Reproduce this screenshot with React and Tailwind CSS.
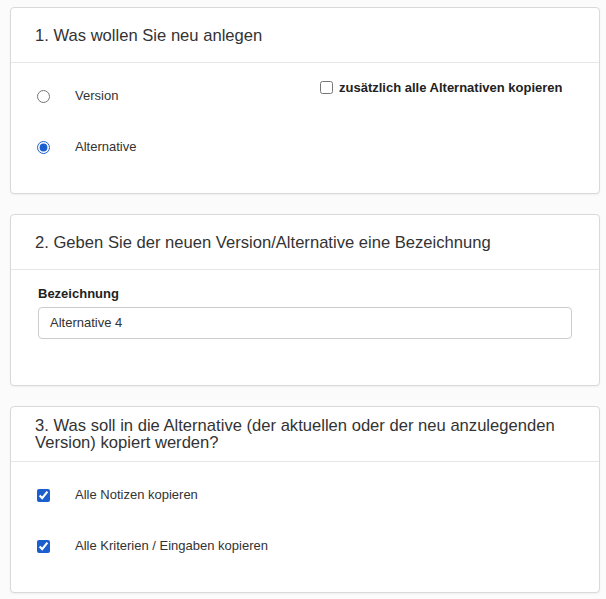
import React from "react";

function Card({ title, children, bodyClass }) {
  return (
    <div className="rounded-[4px] border border-[#d9d9d9] bg-white shadow-[0_1px_2px_rgba(0,0,0,0.05)]">
      <div className="flex h-[55px] items-center border-b border-[#e6e6e6] px-[24px] text-[16.6px] leading-[17px] text-[#333]">
        <div>{title}</div>
      </div>
      <div className={bodyClass}>{children}</div>
    </div>
  );
}

function Row({ children }) {
  return <div className="flex h-[18px] items-center">{children}</div>;
}

export default function App() {
  return (
    <div
      className="min-h-screen bg-[#fbfbfb] pl-[10px] pr-[6px] pt-[7px] pb-[6px]"
      style={{ fontFamily: '"Liberation Sans", Arial, sans-serif' }}
    >
      <div className="flex flex-col gap-[20px]">
        <Card title="1. Was wollen Sie neu anlegen" bodyClass="flex h-[130px]">
          <div className="w-[309px] pl-[26px] pt-[24px] flex flex-col gap-[33px] text-[13px] text-[#333]">
            <Row>
              <input type="radio" name="typ" className="h-[13px] w-[13px] accent-[#1b5fcf]" />
              <span className="ml-[25px]">Version</span>
            </Row>
            <Row>
              <input type="radio" name="typ" defaultChecked className="h-[13px] w-[13px] accent-[#1b5fcf]" />
              <span className="ml-[25px]">Alternative</span>
            </Row>
          </div>
          <div className="pt-[17px]">
            <div className="flex h-[15px] items-center">
              <input type="checkbox" className="h-[13px] w-[13px] accent-[#1b5fcf]" />
              <span className="ml-[6px] text-[13px] font-bold text-[#222]">zusätzlich alle Alternativen kopieren</span>
            </div>
          </div>
        </Card>

        <Card
          title="2. Geben Sie der neuen Version/Alternative eine Bezeichnung"
          bodyClass="h-[115px] px-[27px] pt-[16px]"
        >
          <div className="h-[15px] text-[13px] font-bold leading-[15px] text-[#222]">Bezeichnung</div>
          <div className="mt-[6px] flex h-[32px] items-center rounded-[4px] border border-[#cccccc] px-[11px] text-[13px] text-[#333]">
            Alternative 4
          </div>
        </Card>

        <Card
          title="3. Was soll in die Alternative (der aktuellen oder der neu anzulegenden Version) kopiert werden?"
          bodyClass="h-[130px] pl-[26px] pt-[24px] flex flex-col gap-[33px] text-[13px] text-[#333]"
        >
          <Row>
            <input type="checkbox" defaultChecked className="h-[13px] w-[13px] accent-[#1b5fcf]" />
            <span className="ml-[25px]">Alle Notizen kopieren</span>
          </Row>
          <Row>
            <input type="checkbox" defaultChecked className="h-[13px] w-[13px] accent-[#1b5fcf]" />
            <span className="ml-[25px]">Alle Kriterien / Eingaben kopieren</span>
          </Row>
        </Card>
      </div>
    </div>
  );
}
